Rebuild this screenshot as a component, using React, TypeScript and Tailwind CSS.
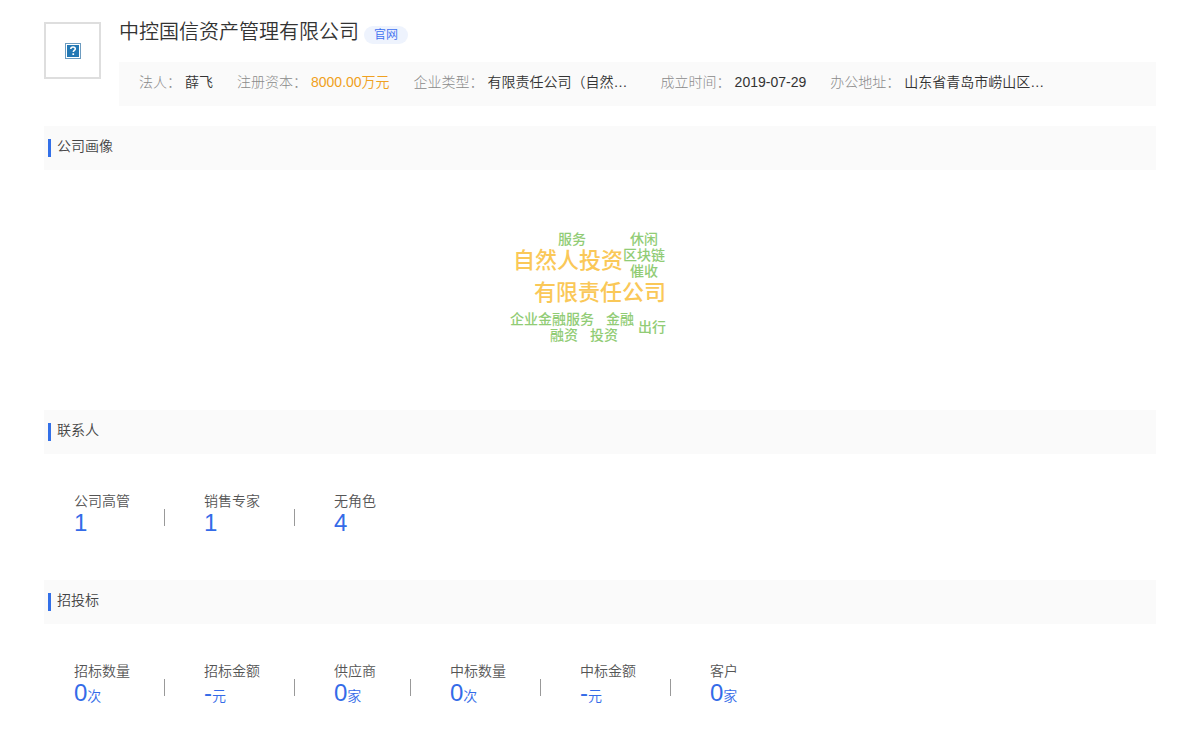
type Stat = { label: string; value: string; unit?: string };

const facts = [
  { label: "法人：", value: "薛飞" },
  { label: "注册资本：", value: "8000.00万元", highlight: true },
  { label: "企业类型：", value: "有限责任公司（自然…" },
  { label: "成立时间：", value: "2019-07-29" },
  { label: "办公地址：", value: "山东省青岛市崂山区…" },
];

const words = [
  { text: "服务", x: 558, y: 244 },
  { text: "休闲", x: 630, y: 244 },
  { text: "自然人投资", x: 513, y: 268, large: true },
  { text: "区块链", x: 623, y: 260 },
  { text: "催收", x: 630, y: 276 },
  { text: "有限责任公司", x: 534, y: 300, large: true },
  { text: "企业金融服务", x: 510, y: 324 },
  { text: "金融", x: 606, y: 324 },
  { text: "出行", x: 638, y: 332 },
  { text: "融资", x: 550, y: 340 },
  { text: "投资", x: 590, y: 340 },
];

const contacts: Stat[] = [
  { label: "公司高管", value: "1" },
  { label: "销售专家", value: "1" },
  { label: "无角色", value: "4" },
];

const bids: Stat[] = [
  { label: "招标数量", value: "0", unit: "次" },
  { label: "招标金额", value: "-", unit: "元" },
  { label: "供应商", value: "0", unit: "家" },
  { label: "中标数量", value: "0", unit: "次" },
  { label: "中标金额", value: "-", unit: "元" },
  { label: "客户", value: "0", unit: "家" },
];

function SectionTitle({ children }: { children: string }) {
  return (
    <h2 className="flex h-11 items-center gap-1.5 bg-[#fafafa] pl-1 text-sm text-[#444]">
      <span className="h-[18px] w-[3px] bg-[#3370e8]" />
      <span className="pb-1">{children}</span>
    </h2>
  );
}

function Stats({ items }: { items: Stat[] }) {
  return (
    <dl className="flex h-[126px] pt-9 pl-[30px]">
      {items.map((item, i) => (
        <div key={item.label} className="flex">
          {i > 0 && <span className="mt-[19px] mr-[39px] ml-[34px] h-[17px] w-px bg-[#999]" />}
          <div>
            <dt className="text-sm leading-[22px] text-[#555]">{item.label}</dt>
            <dd className="text-2xl leading-[22px] text-[#346be8]">
              {item.value}
              {item.unit && <span className="text-sm leading-none">{item.unit}</span>}
            </dd>
          </div>
        </div>
      ))}
    </dl>
  );
}

export default function App() {
  return (
    <main className="min-h-screen bg-white px-11 pt-[22px] font-['Liberation_Sans','Noto_Sans_CJK_SC',sans-serif] font-[350]">
      <header className="flex gap-[18px]">
        <div className="flex size-[57px] shrink-0 items-center justify-center border-2 border-[#dedede]">
          <svg width="16" height="16" viewBox="0 0 16 16" role="img" aria-label="公司标志">
            <rect x="0.5" y="0.5" width="15" height="15" fill="#fff" stroke="#6d9cc0" />
            <rect x="2" y="2" width="12" height="12" fill="#2378b4" />
            <path d="M5.8 6.1C5.8 4.6 6.7 4 8 4s2.3.7 2.3 1.9C10.3 7.3 8.3 7.4 8.3 9" fill="none" stroke="#fff" strokeWidth="1.5" />
            <rect x="7.4" y="10.3" width="1.7" height="1.7" fill="#fff" />
          </svg>
        </div>
        <div className="min-w-0 flex-1">
          <div className="flex h-10 items-start gap-[5px]">
            <h1 className="text-xl leading-5 text-[#333]">中控国信资产管理有限公司</h1>
            <a href="#website" className="mt-1 rounded-full bg-[#eef3fd] px-2.5 text-xs leading-[18px] text-[#3d6ff0]">
              官网
            </a>
          </div>
          <dl className="flex h-11 items-center gap-6 bg-[#fafafa] pb-1 pl-5 text-sm">
            {facts.map((fact) => (
              <div key={fact.label} className="flex shrink-0 gap-1">
                <dt className="font-light text-[#8a8a8a]">{fact.label}</dt>
                <dd
                  className={
                    fact.highlight
                      ? "text-[#f0a020]"
                      : fact.value.endsWith("…")
                        ? "w-[149px] text-[#333]"
                        : "text-[#333]"
                  }
                >
                  {fact.value}
                </dd>
              </div>
            ))}
          </dl>
        </div>
      </header>

      <section className="mt-5">
        <SectionTitle>公司画像</SectionTitle>
        <svg className="mx-auto block h-60 w-60" viewBox="480 170 240 240" role="img" aria-label="公司画像">
          {words.map((word) => (
            <text
              key={word.text}
              x={word.x}
              y={word.y}
              className={word.large ? "fill-[#fac858] text-[22px] font-medium" : "fill-[#91cc75] text-sm font-medium"}
            >
              {word.text}
            </text>
          ))}
        </svg>
      </section>

      <section>
        <SectionTitle>联系人</SectionTitle>
        <Stats items={contacts} />
      </section>

      <section>
        <SectionTitle>招投标</SectionTitle>
        <Stats items={bids} />
      </section>
    </main>
  );
}
